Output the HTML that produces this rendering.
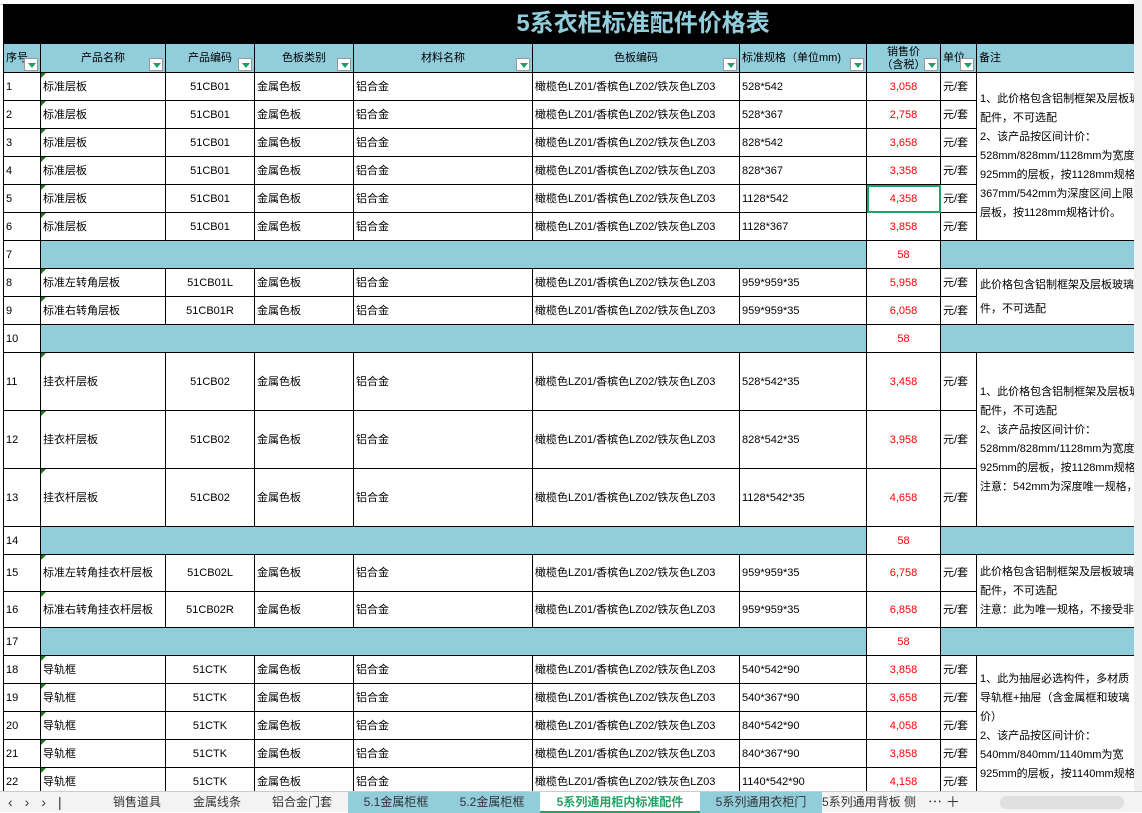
<!DOCTYPE html>
<html><head><meta charset="utf-8"><style>
*{margin:0;padding:0;box-sizing:border-box}
body{width:1142px;height:812px;overflow:hidden;background:#fff;font-family:"Liberation Sans","Noto Sans CJK SC",sans-serif;font-size:11px;color:#000;position:relative}
.top{position:absolute;left:0;top:0;width:1142px;height:5px;background:#fff;border-bottom:1px solid #ccc}
table{position:absolute;left:3px;top:4px;border-collapse:collapse;table-layout:fixed;width:1131px}
td{border:1px solid #000;overflow:hidden;white-space:nowrap;padding:0 2px;vertical-align:middle;position:relative;line-height:14px}
.title{background:#000;color:#92cddc;font-size:24px;font-weight:bold;text-align:center;height:39px;padding-left:150px;border-color:#000;line-height:30px}
.h td{background:#92cddc;text-align:center;height:28px;font-size:11px}
.dd{position:absolute;right:2px;bottom:1px;width:14px;height:13px;background:#fff;border:1px solid #999}
.dd:after{content:"";position:absolute;left:3px;top:4px;border-left:4px solid transparent;border-right:4px solid transparent;border-top:5px solid #1a9e6a}
.c{text-align:center}.r{color:#f00;text-align:center}
.b{background:#92cddc}
.tri{position:absolute;left:0;top:0;border-top:5px solid #1a7a1a;border-right:5px solid transparent}
.n{white-space:normal;vertical-align:middle;line-height:19px;padding:0 3px;font-size:11px}
.n div{white-space:nowrap;height:19px}
.sel{outline:2px solid #21a366;outline-offset:-2px}
.tabs{position:absolute;left:0;top:791px;width:1142px;height:21px;background:#f3f3f3;border-top:1px solid #ccc;font-size:12px;color:#333}
.tabs span{position:absolute;top:0;height:21px;line-height:20px;text-align:center}
.tb{background:#92cddc}
.act{background:#fff;color:#21a366;font-weight:bold;border-bottom:2px solid #21a366}
.sb{position:absolute;right:0;top:0;width:8px;height:791px;background:#f0f0f0}
</style></head><body>
<div class="top"></div>
<table>
<colgroup><col style="width:37px"><col style="width:125px"><col style="width:89px"><col style="width:99px"><col style="width:179px"><col style="width:207px"><col style="width:127px"><col style="width:74px"><col style="width:36px"><col style="width:158px"></colgroup>
<tr><td colspan="10" class="title">5系衣柜标准配件价格表</td></tr>
<tr class="h"><td style="text-align:left">序号<i class="dd"></i></td><td>产品名称<i class="dd"></i></td><td>产品编码<i class="dd"></i></td><td>色板类别<i class="dd"></i></td><td>材料名称<i class="dd"></i></td><td>色板编码<i class="dd"></i></td><td style="text-align:left">标准规格（单位mm)<i class="dd"></i></td><td style="line-height:13px;vertical-align:top;padding-top:2px">销售价<br>（含税）<i class="dd"></i></td><td style="text-align:left">单位<i class="dd"></i></td><td style="text-align:left">备注</td></tr>

<tr style="height:28px"><td>1</td><td><i class="tri"></i>标准层板</td><td class="c">51CB01</td><td>金属色板</td><td>铝合金</td><td>橄榄色LZ01/香槟色LZ02/铁灰色LZ03</td><td>528*542</td><td class="r">3,058</td><td>元/套</td>
<td rowspan="6" class="n"><div>1、此价格包含铝制框架及层板玻璃</div><div>配件，不可选配</div><div>2、该产品按区间计价：</div><div>528mm/828mm/1128mm为宽度</div><div>925mm的层板，按1128mm规格</div><div>367mm/542mm为深度区间上限</div><div>层板，按1128mm规格计价。</div></td></tr>
<tr style="height:28px"><td>2</td><td><i class="tri"></i>标准层板</td><td class="c">51CB01</td><td>金属色板</td><td>铝合金</td><td>橄榄色LZ01/香槟色LZ02/铁灰色LZ03</td><td>528*367</td><td class="r">2,758</td><td>元/套</td></tr>
<tr style="height:28px"><td>3</td><td><i class="tri"></i>标准层板</td><td class="c">51CB01</td><td>金属色板</td><td>铝合金</td><td>橄榄色LZ01/香槟色LZ02/铁灰色LZ03</td><td>828*542</td><td class="r">3,658</td><td>元/套</td></tr>
<tr style="height:28px"><td>4</td><td><i class="tri"></i>标准层板</td><td class="c">51CB01</td><td>金属色板</td><td>铝合金</td><td>橄榄色LZ01/香槟色LZ02/铁灰色LZ03</td><td>828*367</td><td class="r">3,358</td><td>元/套</td></tr>
<tr style="height:28px"><td>5</td><td><i class="tri"></i>标准层板</td><td class="c">51CB01</td><td>金属色板</td><td>铝合金</td><td>橄榄色LZ01/香槟色LZ02/铁灰色LZ03</td><td>1128*542</td><td class="r sel">4,358</td><td>元/套</td></tr>
<tr style="height:28px"><td>6</td><td><i class="tri"></i>标准层板</td><td class="c">51CB01</td><td>金属色板</td><td>铝合金</td><td>橄榄色LZ01/香槟色LZ02/铁灰色LZ03</td><td>1128*367</td><td class="r">3,858</td><td>元/套</td></tr>
<tr style="height:28px"><td>7</td><td colspan="6" class="b"></td><td class="r">58</td><td colspan="2" class="b"></td></tr>

<tr style="height:28px"><td>8</td><td><i class="tri"></i>标准左转角层板</td><td class="c">51CB01L</td><td>金属色板</td><td>铝合金</td><td>橄榄色LZ01/香槟色LZ02/铁灰色LZ03</td><td>959*959*35</td><td class="r">5,958</td><td>元/套</td>
<td rowspan="2" class="n" style="line-height:24px"><div style="height:24px">此价格包含铝制框架及层板玻璃</div><div style="height:24px">件，不可选配</div></td></tr>
<tr style="height:28px"><td>9</td><td><i class="tri"></i>标准右转角层板</td><td class="c">51CB01R</td><td>金属色板</td><td>铝合金</td><td>橄榄色LZ01/香槟色LZ02/铁灰色LZ03</td><td>959*959*35</td><td class="r">6,058</td><td>元/套</td></tr>
<tr style="height:28px"><td>10</td><td colspan="6" class="b"></td><td class="r">58</td><td colspan="2" class="b"></td></tr>

<tr style="height:58px"><td>11</td><td><i class="tri"></i>挂衣杆层板</td><td class="c">51CB02</td><td>金属色板</td><td>铝合金</td><td>橄榄色LZ01/香槟色LZ02/铁灰色LZ03</td><td>528*542*35</td><td class="r">3,458</td><td>元/套</td>
<td rowspan="3" class="n"><div>1、此价格包含铝制框架及层板玻璃</div><div>配件，不可选配</div><div>2、该产品按区间计价：</div><div>528mm/828mm/1128mm为宽度</div><div>925mm的层板，按1128mm规格</div><div>注意：542mm为深度唯一规格，</div></td></tr>
<tr style="height:58px"><td>12</td><td><i class="tri"></i>挂衣杆层板</td><td class="c">51CB02</td><td>金属色板</td><td>铝合金</td><td>橄榄色LZ01/香槟色LZ02/铁灰色LZ03</td><td>828*542*35</td><td class="r">3,958</td><td>元/套</td></tr>
<tr style="height:58px"><td>13</td><td><i class="tri"></i>挂衣杆层板</td><td class="c">51CB02</td><td>金属色板</td><td>铝合金</td><td>橄榄色LZ01/香槟色LZ02/铁灰色LZ03</td><td>1128*542*35</td><td class="r">4,658</td><td>元/套</td></tr>
<tr style="height:28px"><td>14</td><td colspan="6" class="b"></td><td class="r">58</td><td colspan="2" class="b"></td></tr>

<tr style="height:37px"><td>15</td><td><i class="tri"></i>标准左转角挂衣杆层板</td><td class="c">51CB02L</td><td>金属色板</td><td>铝合金</td><td>橄榄色LZ01/香槟色LZ02/铁灰色LZ03</td><td>959*959*35</td><td class="r">6,758</td><td>元/套</td>
<td rowspan="2" class="n"><div>此价格包含铝制框架及层板玻璃</div><div>配件，不可选配</div><div>注意：此为唯一规格，不接受非</div></td></tr>
<tr style="height:36px"><td>16</td><td><i class="tri"></i>标准右转角挂衣杆层板</td><td class="c">51CB02R</td><td>金属色板</td><td>铝合金</td><td>橄榄色LZ01/香槟色LZ02/铁灰色LZ03</td><td>959*959*35</td><td class="r">6,858</td><td>元/套</td></tr>
<tr style="height:28px"><td>17</td><td colspan="6" class="b"></td><td class="r">58</td><td colspan="2" class="b"></td></tr>

<tr style="height:28px"><td>18</td><td><i class="tri"></i>导轨框</td><td class="c">51CTK</td><td>金属色板</td><td>铝合金</td><td>橄榄色LZ01/香槟色LZ02/铁灰色LZ03</td><td>540*542*90</td><td class="r">3,858</td><td>元/套</td>
<td rowspan="5" class="n" style="vertical-align:top;padding-top:14px"><div>1、此为抽屉必选构件，多材质</div><div>导轨框+抽屉（含金属框和玻璃</div><div>价）</div><div>2、该产品按区间计价：</div><div>540mm/840mm/1140mm为宽</div><div>925mm的层板，按1140mm规格</div></td></tr>
<tr style="height:28px"><td>19</td><td><i class="tri"></i>导轨框</td><td class="c">51CTK</td><td>金属色板</td><td>铝合金</td><td>橄榄色LZ01/香槟色LZ02/铁灰色LZ03</td><td>540*367*90</td><td class="r">3,658</td><td>元/套</td></tr>
<tr style="height:28px"><td>20</td><td><i class="tri"></i>导轨框</td><td class="c">51CTK</td><td>金属色板</td><td>铝合金</td><td>橄榄色LZ01/香槟色LZ02/铁灰色LZ03</td><td>840*542*90</td><td class="r">4,058</td><td>元/套</td></tr>
<tr style="height:28px"><td>21</td><td><i class="tri"></i>导轨框</td><td class="c">51CTK</td><td>金属色板</td><td>铝合金</td><td>橄榄色LZ01/香槟色LZ02/铁灰色LZ03</td><td>840*367*90</td><td class="r">3,858</td><td>元/套</td></tr>
<tr style="height:28px"><td>22</td><td><i class="tri"></i>导轨框</td><td class="c">51CTK</td><td>金属色板</td><td>铝合金</td><td>橄榄色LZ01/香槟色LZ02/铁灰色LZ03</td><td>1140*542*90</td><td class="r">4,158</td><td>元/套</td></tr>
</table>
<div class="sb"></div>
<div class="tabs">
<span style="left:8px;width:80px;text-align:left;font-size:14px;letter-spacing:12px">‹››|</span>
<span style="left:96px;width:82px">销售道具</span>
<span style="left:178px;width:78px">金属线条</span>
<span style="left:256px;width:92px">铝合金门套</span>
<span class="tb" style="left:348px;width:96px">5.1金属柜框</span>
<span class="tb" style="left:444px;width:96px">5.2金属柜框</span>
<span class="act" style="left:540px;width:160px">5系列通用柜内标准配件</span>
<span class="tb" style="left:700px;width:122px">5系列通用衣柜门</span>
<span style="left:822px;width:96px;text-align:left;overflow:hidden">5系列通用背板 侧</span>
<span style="left:924px;width:40px;font-size:14px">⋯ ＋</span>
<span style="left:1000px;width:124px;top:4px;height:13px;background:#e0e0e0;border-radius:6px"></span>
</div>
</body></html>
